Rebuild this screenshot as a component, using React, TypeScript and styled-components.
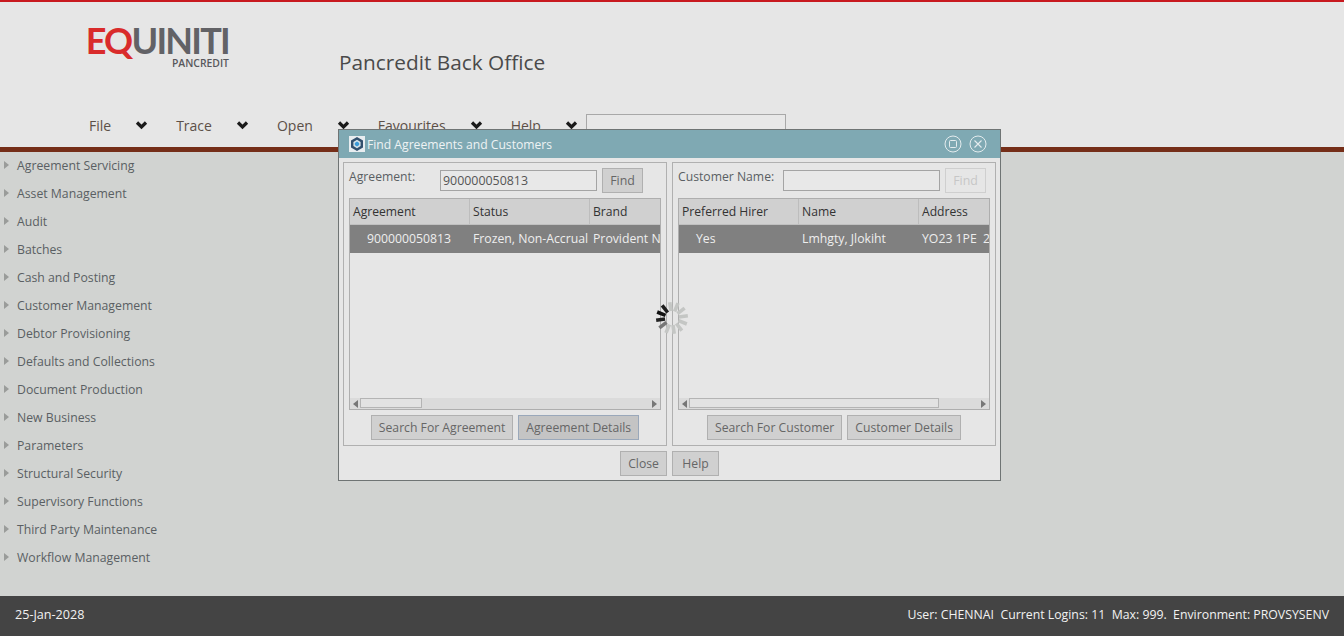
import styled, { createGlobalStyle } from 'styled-components';

const menuItems = ['File', 'Trace', 'Open', 'Favourites', 'Help'];

const sideItems = [
  'Agreement Servicing',
  'Asset Management',
  'Audit',
  'Batches',
  'Cash and Posting',
  'Customer Management',
  'Debtor Provisioning',
  'Defaults and Collections',
  'Document Production',
  'New Business',
  'Parameters',
  'Structural Security',
  'Supervisory Functions',
  'Third Party Maintenance',
  'Workflow Management',
];

// bars clockwise from 12 o'clock, the ones round 10 o'clock are dark
const spinnerColors: Record<number, string> = { 8: '#777', 9: '#222', 10: '#111', 11: '#1c1c1c' };

const Chevron = () => (
  <ChevronIcon viewBox="0 0 13 10">
    <path d="M2 2.5 L6.5 7 L11 2.5" fill="none" stroke="#1a1a1a" strokeWidth="3.2" />
  </ChevronIcon>
);

const Spinner = () => (
  <SpinnerBox viewBox="0 0 34 34">
    {Array.from({ length: 12 }).map((_, i) => (
      <rect
        key={i}
        x="15.2"
        y="1"
        width="3.6"
        height="9"
        fill={spinnerColors[i] || '#c4c6c4'}
        transform={`rotate(${i * 30 - 8} 17 17)`}
      />
    ))}
  </SpinnerBox>
);

const AppIcon = () => (
  <svg width="16" height="16" viewBox="0 0 16 16">
    <rect width="16" height="16" fill="#e8edf0" />
    <path d="M8 1 L14 4.5 V11.5 L8 15 L2 11.5 V4.5 Z" fill="#33506e" />
    <path d="M8 3.8 L11.6 5.9 V10.1 L8 12.2 L4.4 10.1 V5.9 Z" fill="#d8e4ea" />
    <path d="M8 5.6 L10.2 6.9 V9.1 L8 10.4 L5.8 9.1 V6.9 Z" fill="#3b9ad8" />
  </svg>
);

type PanelProps = {
  label: string;
  inputLeft: number;
  value: string;
  findDisabled?: boolean;
  columns: string[];
  cells: string[];
  thumb: number;
  buttons: { text: string; active?: boolean }[];
};

const SearchPanel = ({ label, inputLeft, value, findDisabled, columns, cells, thumb, buttons }: PanelProps) => (
  <Panel>
    <SearchRow>
      <SearchLabel $width={inputLeft}>{label}</SearchLabel>
      <SearchInput readOnly value={value} />
      <FindButton disabled={findDisabled} $disabled={findDisabled}>
        Find
      </FindButton>
    </SearchRow>
    <Table>
      <TableHead>
        {columns.map((c) => (
          <HeadCell key={c}>{c}</HeadCell>
        ))}
      </TableHead>
      <TableRow>
        {cells.map((c, i) => (
          <RowCell key={c} $first={i === 0}>
            {c}
          </RowCell>
        ))}
      </TableRow>
      <TableBody />
      <ScrollBar>
        <ScrollArrow viewBox="0 0 6 8">
          <path d="M5 0 V8 L0 4 Z" fill="#777" />
        </ScrollArrow>
        <ScrollTrack>
          <ScrollThumb $width={thumb} />
        </ScrollTrack>
        <ScrollArrow viewBox="0 0 6 8">
          <path d="M1 0 V8 L6 4 Z" fill="#777" />
        </ScrollArrow>
      </ScrollBar>
    </Table>
    <PanelButtons>
      {buttons.map((b) => (
        <DialogButton key={b.text} $active={b.active}>
          {b.text}
        </DialogButton>
      ))}
    </PanelButtons>
  </Panel>
);

const App = () => {
  return (
    <Page>
      <GlobalStyle />
      <Header>
        <Brand>
          <LogoBox>
            <LogoMark>
              <LogoRed>EQ</LogoRed>UINITI
            </LogoMark>
            <LogoSub>PANCREDIT</LogoSub>
          </LogoBox>
          <AppTitle>Pancredit Back Office</AppTitle>
        </Brand>
        <MenuBar>
          {menuItems.map((m) => (
            <MenuItem key={m}>
              {m}
              <Chevron />
            </MenuItem>
          ))}
          <MenuSearch />
        </MenuBar>
      </Header>
      <Main>
        <SideMenu>
          {sideItems.map((s) => (
            <SideItem key={s}>
              <SideArrow viewBox="0 0 5 8">
                <path d="M0 0 L5 4 L0 8 Z" fill="#9a9c9a" />
              </SideArrow>
              {s}
            </SideItem>
          ))}
        </SideMenu>
      </Main>
      <Footer>
        <FooterDate>25-Jan-2028</FooterDate>
        <span>User: CHENNAI&nbsp; Current Logins: 11&nbsp; Max: 999.&nbsp; Environment: PROVSYSENV</span>
      </Footer>
      <Dialog>
        <TitleBar>
          <AppIcon />
          <DialogTitle>Find Agreements and Customers</DialogTitle>
          <TitleButtons>
            <svg width="18" height="18" viewBox="0 0 18 18">
              <circle cx="9" cy="9" r="8" fill="none" stroke="#e4ecee" strokeWidth="1" />
              <rect x="5.5" y="5.5" width="7" height="7" rx="1" fill="none" stroke="#e4ecee" />
            </svg>
            <svg width="18" height="18" viewBox="0 0 18 18">
              <circle cx="9" cy="9" r="8" fill="none" stroke="#e4ecee" strokeWidth="1" />
              <path d="M5.5 5.5 L12.5 12.5 M12.5 5.5 L5.5 12.5" stroke="#e4ecee" strokeWidth="1.1" />
            </svg>
          </TitleButtons>
        </TitleBar>
        <DialogBody>
          <SearchPanel
            label="Agreement:"
            inputLeft={91}
            value="900000050813"
            columns={['Agreement', 'Status', 'Brand']}
            cells={['900000050813', 'Frozen, Non-Accrual', 'Provident Non-Standard']}
            thumb={62}
            buttons={[{ text: 'Search For Agreement' }, { text: 'Agreement Details', active: true }]}
          />
          <SearchPanel
            label="Customer Name:"
            inputLeft={105}
            value=""
            findDisabled
            columns={['Preferred Hirer', 'Name', 'Address']}
            cells={['Yes', 'Lmhgty, Jlokiht', 'YO23 1PE  28 Hillcrest Road']}
            thumb={250}
            buttons={[{ text: 'Search For Customer' }, { text: 'Customer Details' }]}
          />
        </DialogBody>
        <DialogFooter>
          <DialogButton>Close</DialogButton>
          <DialogButton>Help</DialogButton>
        </DialogFooter>
      </Dialog>
      <Spinner />
    </Page>
  );
};

const GlobalStyle = createGlobalStyle`
  html, body {
    margin: 0;
    padding: 0;
    height: 100%;
    overflow: hidden;
  }
  * {
    box-sizing: border-box;
  }
  body {
    font-family: 'Open Sans', 'Noto Sans', sans-serif;
    font-size: 12.3px;
  }
`;

const Page = styled.div`
  position: relative;
  width: 1344px;
  height: 636px;
  display: flex;
  flex-direction: column;
  overflow: hidden;
  background: #d1d3d1;
`;

const Header = styled.header`
  height: 152px;
  flex: none;
  background: #e6e6e6;
  border-top: 2px solid #c8191f;
  border-bottom: 5px solid #752e18;
  display: flex;
  flex-direction: column;
  overflow: hidden;
`;

const Brand = styled.div`
  height: 111px;
  flex: none;
  padding-left: 88px;
  display: flex;
`;

const LogoBox = styled.div`
  width: 141px;
  margin-right: 110px;
  padding-top: 22px;
  display: flex;
  flex-direction: column;
  align-items: flex-end;
`;

const LogoMark = styled.div`
  font-family: 'Lato', 'Liberation Sans', sans-serif;
  font-size: 36px;
  line-height: 33px;
  font-weight: 700;
  letter-spacing: -1.75px;
  color: #626266;
  white-space: nowrap;
`;

const LogoRed = styled.span`
  color: #d92b2b;
`;

const LogoSub = styled.div`
  margin-top: 1px;
  font-size: 10.4px;
  line-height: 10px;
  font-weight: 600;
  color: #58585c;
`;

const AppTitle = styled.h1`
  margin: 0;
  padding-top: 46px;
  font-size: 20.8px;
  line-height: 28px;
  font-weight: 400;
  color: #4a4a4a;
  white-space: nowrap;
`;

const MenuBar = styled.nav`
  display: flex;
  padding-left: 89px;
  height: 34px;
  flex: none;
`;

const MenuItem = styled.div`
  display: flex;
  align-items: center;
  height: 24px;
  margin-right: 28px;
  font-size: 14px;
  color: #5c5048;
  white-space: nowrap;

  &:nth-child(5) {
    margin-right: 8px;
  }
`;

const ChevronIcon = styled.svg`
  width: 13px;
  height: 10px;
  margin-left: 24px;
`;

const MenuSearch = styled.div`
  width: 200px;
  height: 30px;
  margin-top: 1px;
  border: 1px solid #a8a8a8;
  background: #e8e8e8;
`;

const Main = styled.main`
  flex: 1;
  min-height: 0;
`;

const SideMenu = styled.ul`
  list-style: none;
  margin: 0;
  padding: 0;
`;

const SideItem = styled.li`
  height: 28px;
  display: flex;
  align-items: center;
  padding: 0 0 2px 4px;
  color: #5a5f63;
  font-size: 12.25px;
`;

const SideArrow = styled.svg`
  width: 5px;
  height: 8px;
  margin-right: 8px;
`;

const Footer = styled.footer`
  height: 40px;
  flex: none;
  background: #444444;
  color: #f2f2f2;
  font-size: 12.3px;
  padding: 0 15px 3px;
  display: flex;
  align-items: center;
  justify-content: space-between;
`;

const FooterDate = styled.span`
  font-size: 12.6px;
`;

const Dialog = styled.section`
  position: absolute;
  left: 338px;
  top: 129px;
  width: 663px;
  height: 352px;
  background: #e6e6e6;
  border: 1px solid #6f7474;
  display: flex;
  flex-direction: column;
`;

const TitleBar = styled.div`
  height: 28px;
  flex: none;
  background: #7fa9b3;
  display: flex;
  align-items: center;
  padding: 0 13px 0 10px;
`;

const DialogTitle = styled.div`
  flex: 1;
  margin-left: 2px;
  color: #eef3f4;
  font-size: 12.15px;
`;

const TitleButtons = styled.div`
  display: flex;
  gap: 7px;
`;

const DialogBody = styled.div`
  display: flex;
  gap: 5px;
  padding: 4px 4px 0;
`;

const Panel = styled.div`
  width: 324px;
  height: 284px;
  border: 1px solid #b0b0b0;
  padding: 5px 5px 0;
  display: flex;
  flex-direction: column;
`;

const SearchRow = styled.div`
  display: flex;
  height: 25px;
  margin-bottom: 5px;
`;

const SearchLabel = styled.div<{ $width: number }>`
  width: ${(p) => p.$width}px;
  color: #5a5f63;
  font-size: 12.2px;
  line-height: 17px;
  white-space: nowrap;
`;

const SearchInput = styled.input`
  width: 157px;
  height: 21px;
  margin-top: 2px;
  padding: 0 2px;
  border: 1px solid #a4a4a4;
  background: #e8e8e8;
  font-family: inherit;
  font-size: 12.4px;
  color: #555;
  outline: none;
`;

const FindButton = styled.button<{ $disabled?: boolean }>`
  width: 41px;
  height: 25px;
  margin-left: 5px;
  padding: 0;
  border: 1px solid ${(p) => (p.$disabled ? '#cfcfcf' : '#b0b0b0')};
  background: ${(p) => (p.$disabled ? '#e6e6e6' : '#d0d0d0')};
  color: ${(p) => (p.$disabled ? '#c6c6c6' : '#666')};
  font-family: inherit;
  font-size: 12.4px;
`;

const Table = styled.div`
  width: 312px;
  height: 212px;
  border: 1px solid #aeaeae;
  display: flex;
  flex-direction: column;
  overflow: hidden;
`;

const TableHead = styled.div`
  height: 26px;
  flex: none;
  background: #d0d0d0;
  display: flex;
  border-bottom: 1px solid #c0c0c0;
`;

const HeadCell = styled.div`
  width: 120px;
  flex: none;
  padding: 0 3px;
  font-size: 12.15px;
  line-height: 25px;
  color: #333;
  border-right: 1px solid #bdbdbd;
  white-space: nowrap;

  &:last-child {
    border-right: none;
  }
`;

const TableRow = styled.div`
  height: 28px;
  flex: none;
  background: #808080;
  display: flex;
  overflow: hidden;
`;

const RowCell = styled.div<{ $first?: boolean }>`
  width: 120px;
  flex: none;
  padding-left: ${(p) => (p.$first ? 17 : 3)}px;
  font-size: 12.25px;
  line-height: 27px;
  color: #eeeeee;
  white-space: pre;
  overflow: hidden;
`;

const TableBody = styled.div`
  flex: 1;
`;

const ScrollBar = styled.div`
  height: 11px;
  flex: none;
  background: #dbdbdb;
  display: flex;
  align-items: center;
  justify-content: space-between;
  padding: 0 3px;
`;

const ScrollArrow = styled.svg`
  width: 6px;
  height: 8px;
  flex: none;
`;

const ScrollTrack = styled.div`
  flex: 1;
  height: 11px;
  margin-left: 1px;
`;

const ScrollThumb = styled.div<{ $width: number }>`
  width: ${(p) => p.$width}px;
  height: 10px;
  background: #e2e2e2;
  border: 1px solid #b4b4b4;
`;

const PanelButtons = styled.div`
  display: flex;
  justify-content: center;
  gap: 5px;
  margin-top: 5px;
`;

const DialogButton = styled.button<{ $active?: boolean }>`
  min-width: 47px;
  height: 25px;
  padding: 0 7px;
  border: 1px solid ${(p) => (p.$active ? '#9aa8ba' : '#b0b0b0')};
  background: ${(p) => (p.$active ? '#c4c4c4' : '#d0d0d0')};
  color: #666;
  font-family: inherit;
  font-size: 12.2px;
  white-space: nowrap;
`;

const DialogFooter = styled.div`
  display: flex;
  justify-content: center;
  gap: 5px;
  padding-top: 5px;
`;

const SpinnerBox = styled.svg`
  position: absolute;
  left: 655px;
  top: 301px;
  width: 34px;
  height: 34px;
`;

export default App;
